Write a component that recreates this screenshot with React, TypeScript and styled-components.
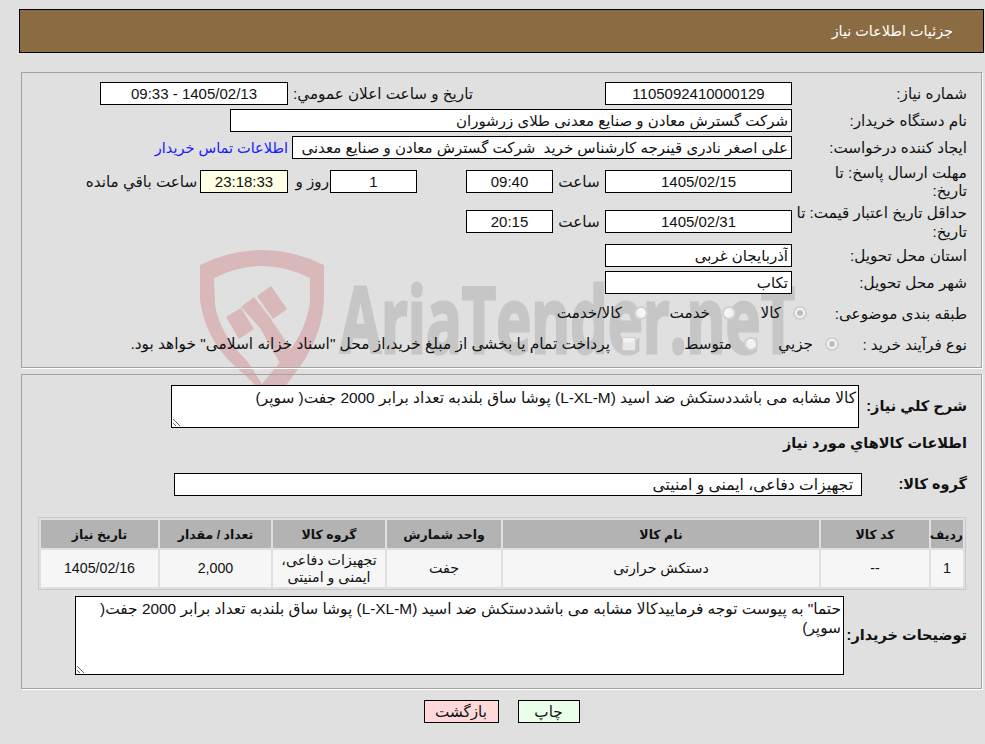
import React from "react";
import styled, { createGlobalStyle } from "styled-components";

const GlobalStyle = createGlobalStyle`
  * {
    box-sizing: border-box;
  }

  html,
  body {
    margin: 0;
    background: #e0e0e0;
  }

  body {
    font-family: "Liberation Sans", "DejaVu Sans", sans-serif;
    font-size: 15.2px;
    color: #111;
  }
`;

const Page = styled.div`
  position: relative;
  width: 985px;
  height: 744px;
  padding: 9px 1px 0 19px;
  overflow: hidden;
  direction: rtl;
`;

const Watermark = styled.svg`
  position: absolute;
  left: 0;
  top: 0;
  z-index: 0;
  pointer-events: none;
`;

const Header = styled.header`
  position: relative;
  z-index: 1;
  width: 965px;
  height: 44px;
  padding-right: 30px;
  display: flex;
  align-items: center;

  color: #fff;
  font-size: 14.4px;
  background: #8b6b41;
  border: 1px solid #000;
`;

const Panel = styled.section<{ $top: number; $height: number; $padTop: number }>`
  position: relative;
  z-index: 1;
  width: 961px;
  height: ${(p) => p.$height}px;
  margin: ${(p) => p.$top}px 2px 0 0;
  padding: ${(p) => p.$padTop}px 14px 0 0;

  border: 1px solid #a3a3a3;
  box-shadow: 1px 1px 0 #fff;
`;

const Row = styled.div<{ $height?: number; $mt?: number }>`
  display: flex;
  align-items: center;
  height: ${(p) => p.$height ?? 23}px;
  margin-top: ${(p) => p.$mt ?? 4}px;
`;

const Label = styled.label<{ $width?: number }>`
  flex: none;
  width: ${(p) => p.$width ?? 175}px;
  padding-top: 2px;
  line-height: 18.5px;
  white-space: nowrap;
`;

const BoldLabel = styled(Label)`
  padding-top: 0;
  font-size: 14.5px;
  font-weight: 700;
`;

const Field = styled.input<{ $width: number; $center?: boolean; $tint?: boolean }>`
  flex: none;
  width: ${(p) => p.$width}px;
  height: 23px;
  padding: 0 3px;

  font: inherit;
  font-size: 15px;
  color: #111;
  text-align: ${(p) => (p.$center ? "center" : "right")};
  background: ${(p) => (p.$tint ? "#ffffe6" : "#fff")};
  border: 1px solid #000;
  outline: none;
  direction: rtl;
`;

const ClippedField = styled(Field)`
  padding-left: 6px;
`;

const GroupField = styled(Field)`
  padding-right: 8px;
  font-size: 15.6px;
`;

const Note = styled.textarea<{ $width: number; $height: number }>`
  flex: none;
  width: ${(p) => p.$width}px;
  height: ${(p) => p.$height}px;
  padding: 2px;

  font: inherit;
  font-size: 15.4px;
  line-height: 19px;
  color: #111;
  background: #fff;
  border: 1px solid #000;
  outline: none;
  direction: rtl;
`;

const Caption = styled.span<{ $width: number; $center?: boolean; $pad?: number }>`
  flex: none;
  width: ${(p) => p.$width}px;
  padding-top: 1px;
  padding-right: ${(p) => p.$pad ?? 0}px;
  text-align: ${(p) => (p.$center ? "center" : "right")};
  white-space: nowrap;
`;

const ContactLink = styled.a`
  margin-right: 4px;
  font-size: 14.5px;
  color: #1a1aff;
  white-space: nowrap;
`;

const Choice = styled.span<{ $width?: number }>`
  flex: none;
  width: ${(p) => (p.$width ? `${p.$width}px` : "auto")};
  display: flex;
  align-items: center;
  gap: 12px;
  white-space: nowrap;
`;

const LongChoice = styled(Choice)`
  font-size: 15.4px;
`;

const Radio = styled.span<{ $checked?: boolean }>`
  flex: none;
  width: 14px;
  height: 14px;
  display: flex;
  align-items: center;
  justify-content: center;

  background: rgba(255, 255, 255, 0.75);
  border: 2px solid #cfcfcf;
  border-radius: 50%;

  &::after {
    content: "";
    width: 6px;
    height: 6px;
    border-radius: 50%;
    background: ${(p) => (p.$checked ? "#bdbdbd" : "transparent")};
  }
`;

const CheckBox = styled.span`
  flex: none;
  width: 14px;
  height: 14px;
  background: rgba(255, 255, 255, 0.6);
  border: 1px solid #cfcfcf;
  border-radius: 2px;
`;

const ItemsTable = styled.table`
  width: 928px;
  margin: 21px 1px 0 0;
  table-layout: fixed;
  border-collapse: separate;
  border-spacing: 2px;
  border: 1px solid #c9c9c9;
`;

const HeadCell = styled.th<{ $width?: number }>`
  width: ${(p) => (p.$width ? `${p.$width}px` : "auto")};
  height: 28px;
  padding: 0;

  font-size: 12.5px;
  font-weight: 700;
  text-align: center;
  background: #b3b3b3;
`;

const Cell = styled.td`
  height: 37px;
  padding: 0;

  font-size: 14.2px;
  line-height: 17px;
  text-align: center;
  background: #f6f6f6;
`;

const Buttons = styled.div`
  position: relative;
  z-index: 1;
  width: 961px;
  margin: 11px 2px 0 0;
  display: flex;
  justify-content: center;
  gap: 19px;
`;

const ActionButton = styled.button<{ $bg: string; $width: number }>`
  width: ${(p) => p.$width}px;
  height: 23px;
  padding: 0;

  font: inherit;
  color: #111;
  background: ${(p) => p.$bg};
  border: 1px solid #000;
`;

const columns = [
  { title: "ردیف", width: 32, value: "1" },
  { title: "کد کالا", width: 108, value: "--" },
  { title: "نام کالا", width: 316, value: "دستکش حرارتی" },
  { title: "واحد شمارش", width: 114, value: "جفت" },
  { title: "گروه کالا", width: 112, value: "تجهیزات دفاعی، ایمنی و امنیتی" },
  { title: "تعداد / مقدار", width: 111, value: "2,000" },
  { title: "تاریخ نیاز", width: 117, value: "1405/02/16" },
];

const summary =
  "کالا مشابه می باشددستکش ضد اسید (L-XL-M) پوشا ساق بلندبه تعداد برابر 2000 جفت( سوپر)";

export default function App() {
  return (
    <Page>
      <GlobalStyle />
      <Watermark width="985" height="744" viewBox="0 0 985 744">
        <path
          fill="#d9b8b9"
          fillRule="evenodd"
          d="M200 265 Q262 235 324 265 L324 300 Q322 340 293 376 L281 392 L262 392 L245 375 Q206 345 200 300 Z M214 278 L215 305 Q220 335 248 362 L262 384 L290 350 Q308 325 310 300 L310 278 Q262 254 214 278 Z"
        />
        <path fill="#d9b8b9" d="M226 317 L241 308 L254 329 L239 339 Z" />
        <path fill="#d9b8b9" d="M241 307 L254 297 L272 320 L260 328 Z" />
        <path fill="#d9b8b9" d="M257 296 L271 286 L287 309 L273 319 Z" />
        <path fill="#d9b8b9" d="M259 326 L270 318 L300 362 L288 378 Z" />
        <text
          x="340"
          y="353"
          textLength="455"
          lengthAdjust="spacingAndGlyphs"
          direction="ltr"
          stroke="#c6c6c6"
          strokeWidth="3"
          fontFamily="'Open Sans', sans-serif"
          fontSize="92"
          fontWeight="700"
          fill="#c6c6c6"
        >
          AriaTender.neT
        </text>
      </Watermark>

      <Header>جزئیات اطلاعات نیاز</Header>

      <Panel $top={19} $height={296} $padTop={9}>
        <Row $mt={0}>
          <Label>شماره نیاز:</Label>
          <Field $width={187} $center readOnly value="1105092410000129" />
          <Caption $width={317} $pad={132}>تاریخ و ساعت اعلان عمومي:</Caption>
          <Field $width={188} $center readOnly value="1405/02/13 - 09:33" />
        </Row>
        <Row>
          <Label>نام دستگاه خریدار:</Label>
          <Field $width={562} readOnly value="شرکت گسترش معادن و صنایع معدنی طلای زرشوران" />
        </Row>
        <Row>
          <Label>ایجاد کننده درخواست:</Label>
          <ClippedField
            $width={500}
            readOnly
            value="علی اصغر نادری قینرجه کارشناس خرید  شرکت گسترش معادن و صنایع معدنی طلای زرشوران"
          />
          <ContactLink>اطلاعات تماس خریدار</ContactLink>
        </Row>
        <Row $height={36}>
          <Label>مهلت ارسال پاسخ: تا<br />تاریخ:</Label>
          <Field $width={187} $center readOnly value="1405/02/15" />
          <Caption $width={52} $center>ساعت</Caption>
          <Field $width={87} $center readOnly value="09:40" />
          <Caption $width={49} />
          <Field $width={87} $center readOnly value="1" />
          <Caption $width={42} $pad={1}>روز و</Caption>
          <Field $width={88} $center $tint readOnly value="23:18:33" />
          <Caption $width={117} $center>ساعت باقي مانده</Caption>
        </Row>
        <Row $height={37}>
          <Label>حداقل تاریخ اعتبار قیمت: تا<br />تاریخ:</Label>
          <Field $width={187} $center readOnly value="1405/02/31" />
          <Caption $width={52} $center>ساعت</Caption>
          <Field $width={87} $center readOnly value="20:15" />
        </Row>
        <Row>
          <Label>استان محل تحویل:</Label>
          <Field $width={187} readOnly value="آذربایجان غربی" />
        </Row>
        <Row>
          <Label>شهر محل تحویل:</Label>
          <Field $width={187} readOnly value="تکاب" />
        </Row>
        <Row $height={30}>
          <Label $width={160}>طبقه بندی موضوعی:</Label>
          <Choice $width={71}><Radio $checked />کالا</Choice>
          <Choice $width={88}><Radio />خدمت</Choice>
          <Choice><Radio />کالا/خدمت</Choice>
        </Row>
        <Row $height={32} $mt={0}>
          <Label $width={128}>نوع فرآیند خرید :</Label>
          <Choice $width={81}><Radio $checked />جزيي</Choice>
          <Choice $width={122}><Radio />متوسط</Choice>
          <LongChoice>
            <CheckBox />
            پرداخت تمام یا بخشی از مبلغ خرید،از محل "اسناد خزانه اسلامی" خواهد بود.
          </LongChoice>
        </Row>
      </Panel>

      <Panel $top={6} $height={315} $padTop={10}>
        <Row $height={43} $mt={0}>
          <BoldLabel $width={108}>شرح كلي نياز:</BoldLabel>
          <Note $width={688} $height={43} readOnly value={summary} />
        </Row>
        <Row $height={20} $mt={5}>
          <BoldLabel $width={300}>اطلاعات كالاهاي مورد نياز</BoldLabel>
        </Row>
        <Row $mt={20}>
          <BoldLabel $width={105}>گروه کالا:</BoldLabel>
          <GroupField $width={688} readOnly value="تجهیزات دفاعی، ایمنی و امنیتی" />
        </Row>
        <ItemsTable>
          <thead>
            <tr>
              {columns.map((col) => (
                <HeadCell key={col.title} $width={col.width}>{col.title}</HeadCell>
              ))}
            </tr>
          </thead>
          <tbody>
            <tr>
              {columns.map((col) => (
                <Cell key={col.title}>{col.value}</Cell>
              ))}
            </tr>
          </tbody>
        </ItemsTable>
        <Row $height={79} $mt={6}>
          <BoldLabel $width={123}>توضیحات خریدار:</BoldLabel>
          <Note
            $width={769}
            $height={79}
            readOnly
            value={`حتما" به پیوست توجه فرماییدکالا مشابه می باشددستکش ضد اسید (L-XL-M) پوشا ساق بلندبه تعداد برابر 2000 جفت( سوپر)`}
          />
        </Row>
      </Panel>

      <Buttons>
        <ActionButton $bg="#e9ffe9" $width={62}>چاپ</ActionButton>
        <ActionButton $bg="#ffd9d9" $width={75}>بازگشت</ActionButton>
      </Buttons>
    </Page>
  );
}
